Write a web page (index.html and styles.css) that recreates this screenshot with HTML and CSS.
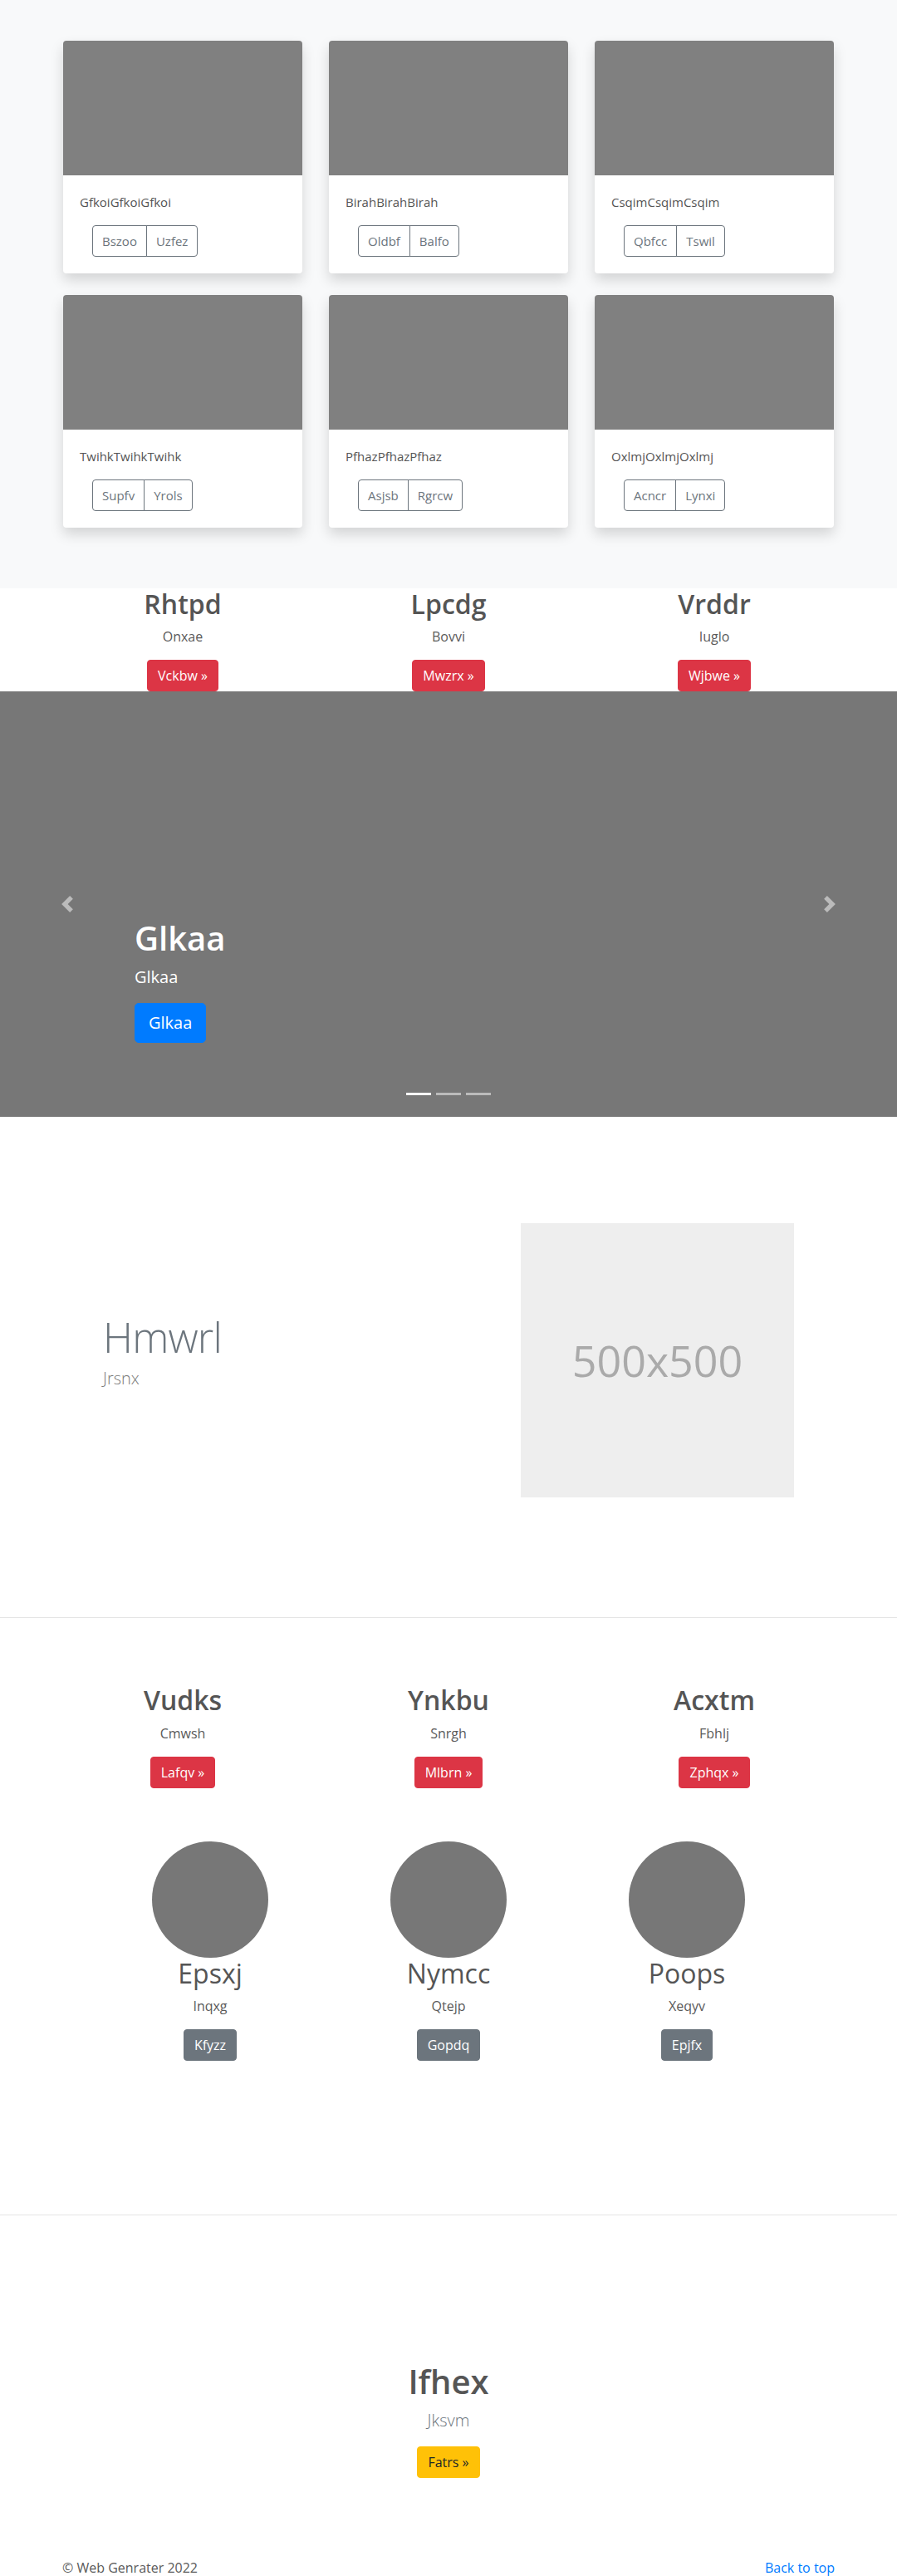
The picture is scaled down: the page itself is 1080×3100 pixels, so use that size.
FILE: index.html
```html
<!DOCTYPE html>
<html lang="en">
<head>
<meta charset="utf-8">
<title>Web Genrater</title>
<link rel="stylesheet" href="styles.css">
</head>
<body>
<section class="album">
  <div class="album-grid">
    <div class="card">
      <div class="card-img"></div>
      <div class="card-body">
        <p class="card-text">GfkoiGfkoiGfkoi</p>
        <div class="btn-group"><button class="btn btn-o">Bszoo</button><button class="btn btn-o">Uzfez</button></div>
      </div>
    </div>
    <div class="card">
      <div class="card-img"></div>
      <div class="card-body">
        <p class="card-text">BirahBirahBirah</p>
        <div class="btn-group"><button class="btn btn-o">Oldbf</button><button class="btn btn-o">Balfo</button></div>
      </div>
    </div>
    <div class="card">
      <div class="card-img"></div>
      <div class="card-body">
        <p class="card-text">CsqimCsqimCsqim</p>
        <div class="btn-group"><button class="btn btn-o">Qbfcc</button><button class="btn btn-o">Tswil</button></div>
      </div>
    </div>
    <div class="card">
      <div class="card-img"></div>
      <div class="card-body">
        <p class="card-text">TwihkTwihkTwihk</p>
        <div class="btn-group"><button class="btn btn-o">Supfv</button><button class="btn btn-o">Yrols</button></div>
      </div>
    </div>
    <div class="card">
      <div class="card-img"></div>
      <div class="card-body">
        <p class="card-text">PfhazPfhazPfhaz</p>
        <div class="btn-group"><button class="btn btn-o">Asjsb</button><button class="btn btn-o">Rgrcw</button></div>
      </div>
    </div>
    <div class="card">
      <div class="card-img"></div>
      <div class="card-body">
        <p class="card-text">OxlmjOxlmjOxlmj</p>
        <div class="btn-group"><button class="btn btn-o">Acncr</button><button class="btn btn-o">Lynxi</button></div>
      </div>
    </div>
  </div>
</section>

<section class="cols3">
  <div class="col">
    <h2 class="col-title">Rhtpd</h2>
    <p class="col-text">Onxae</p>
    <a class="btn btn-danger" href="#">Vckbw &raquo;</a>
  </div>
  <div class="col">
    <h2 class="col-title">Lpcdg</h2>
    <p class="col-text">Bovvi</p>
    <a class="btn btn-danger" href="#">Mwzrx &raquo;</a>
  </div>
  <div class="col">
    <h2 class="col-title">Vrddr</h2>
    <p class="col-text">Iuglo</p>
    <a class="btn btn-danger" href="#">Wjbwe &raquo;</a>
  </div>
</section>

<section class="carousel">
  <a class="car-ctrl car-prev" href="#" aria-label="Previous">
    <svg width="20" height="20" viewBox="0 0 8 8"><path d="M5.25 0l-4 4 4 4 1.5-1.5L4.25 4l2.5-2.5L5.25 0z" fill="#fff"/></svg>
  </a>
  <a class="car-ctrl car-next" href="#" aria-label="Next">
    <svg width="20" height="20" viewBox="0 0 8 8"><path d="M2.75 0l-1.5 1.5L3.75 4l-2.5 2.5L2.75 8l4-4-4-4z" fill="#fff"/></svg>
  </a>
  <div class="car-caption">
    <h1 class="car-title">Glkaa</h1>
    <p class="car-text">Glkaa</p>
    <a class="btn btn-primary btn-lg" href="#">Glkaa</a>
  </div>
  <ol class="car-ind">
    <li class="active"></li>
    <li></li>
    <li></li>
  </ol>
</section>

<section class="featurette">
  <div class="feat-text">
    <h2 class="feat-title">Hmwrl</h2>
    <p class="feat-lead">Jrsnx</p>
  </div>
  <div class="ph"><span>500x500</span></div>
</section>

<hr class="divider">

<section class="marketing">
  <div class="cols3 cols3-m">
    <div class="col">
      <h2 class="col-title">Vudks</h2>
      <p class="col-text">Cmwsh</p>
      <a class="btn btn-danger" href="#">Lafqv &raquo;</a>
    </div>
    <div class="col">
      <h2 class="col-title">Ynkbu</h2>
      <p class="col-text">Snrgh</p>
      <a class="btn btn-danger" href="#">Mlbrn &raquo;</a>
    </div>
    <div class="col">
      <h2 class="col-title">Acxtm</h2>
      <p class="col-text">Fbhlj</p>
      <a class="btn btn-danger" href="#">Zphqx &raquo;</a>
    </div>
  </div>
  <div class="circles">
    <div class="circ-col">
      <div class="circle"></div>
      <h2 class="circ-title">Epsxj</h2>
      <p class="col-text">Inqxg</p>
      <a class="btn btn-secondary" href="#">Kfyzz</a>
    </div>
    <div class="circ-col">
      <div class="circle"></div>
      <h2 class="circ-title">Nymcc</h2>
      <p class="col-text">Qtejp</p>
      <a class="btn btn-secondary" href="#">Gopdq</a>
    </div>
    <div class="circ-col">
      <div class="circle"></div>
      <h2 class="circ-title">Poops</h2>
      <p class="col-text">Xeqyv</p>
      <a class="btn btn-secondary" href="#">Epjfx</a>
    </div>
  </div>
</section>

<hr class="divider">

<section class="cta">
  <h1 class="cta-title">Ifhex</h1>
  <p class="cta-lead">Jksvm</p>
  <a class="btn btn-warning" href="#">Fatrs &raquo;</a>
</section>

<footer class="footer">
  <p>&copy; Web Genrater 2022</p>
  <a href="#" class="top-link">Back to top</a>
</footer>
</body>
</html>
```

FILE: styles.css
```css
* { box-sizing: border-box; }

body {
  margin: 0;
  font-family: "Open Sans", "Noto Sans", sans-serif;
  font-size: 16px;
  line-height: 1.5;
  color: #5a5a5a;
  background: #fff;
}

p, h1, h2 { margin: 0; }

.btn {
  display: inline-block;
  font-family: inherit;
  font-size: 16px;
  font-weight: 400;
  line-height: 24px;
  padding: 6px 12px;
  border: 1px solid transparent;
  border-radius: 4px;
  text-decoration: none;
  cursor: pointer;
  vertical-align: middle;
}

.btn-danger { background: #dc3545; border-color: #dc3545; color: #fff; }
.btn-secondary { background: #6c757d; border-color: #6c757d; color: #fff; }
.btn-warning { background: #ffc107; border-color: #ffc107; color: #212529; }
.btn-primary { background: #007bff; border-color: #007bff; color: #fff; }
.btn-lg { font-size: 20px; line-height: 30px; padding: 8px 16px; border-radius: 5px; }

/* Album */
.album {
  background: #f8f9fa;
  padding: 49px 0 73px;
}

.album-grid {
  display: grid;
  grid-template-columns: repeat(3, 288px);
  column-gap: 32px;
  row-gap: 26px;
  justify-content: center;
}

.card {
  background: #fff;
  border-radius: 4px;
  overflow: hidden;
  box-shadow: 0 8px 16px rgba(0, 0, 0, .15);
}

.card-img {
  height: 162px;
  background: #808080;
}

.card-body { padding: 20px; }

.card-text {
  margin-bottom: 16px;
  font-size: 15px;
  line-height: 24px;
  color: #555;
}

.btn-group {
  display: inline-flex;
  margin-left: 15px;
}

.btn-o {
  background: transparent;
  border-color: #6c757d;
  color: #6c757d;
  font-size: 15px;
  padding: 6px 11px;
}

.btn-group .btn-o:first-child { border-radius: 4px 0 0 4px; }
.btn-group .btn-o:last-child { border-radius: 0 4px 4px 0; margin-left: -1px; }

/* Three column text */
.cols3 {
  display: grid;
  grid-template-columns: repeat(3, 320px);
  justify-content: center;
  text-align: center;
}

.col-title {
  font-size: 32px;
  font-weight: 600;
  line-height: 1.2;
  margin-bottom: 8px;
  color: #555;
}

.col-text { margin-bottom: 16px; }

/* Carousel */
.carousel {
  position: relative;
  height: 512px;
  background: #777;
}

.car-ctrl {
  position: absolute;
  top: 0;
  bottom: 0;
  width: 15%;
  display: flex;
  align-items: center;
  justify-content: center;
  opacity: .5;
}

.car-prev { left: 0; }
.car-next { right: 0; }

.car-caption {
  position: absolute;
  left: 15%;
  right: 15%;
  top: 273px;
  color: #fff;
}

.car-title {
  font-size: 40px;
  font-weight: 600;
  line-height: 1.2;
  margin-bottom: 8px;
}

.car-text {
  font-size: 20px;
  line-height: 30px;
  margin-bottom: 16px;
}

.car-ind {
  position: absolute;
  left: 0;
  right: 0;
  bottom: 26px;
  margin: 0;
  padding: 0;
  list-style: none;
  display: flex;
  justify-content: center;
  gap: 6px;
}

.car-ind li {
  width: 30px;
  height: 3px;
  background: #fff;
  opacity: .5;
}

.car-ind li.active { opacity: 1; }

/* Featurette */
.featurette {
  display: flex;
  align-items: center;
  padding: 128px 0 144px 124px;
}

.feat-text { width: 503px; }

.feat-title {
  font-size: 50px;
  font-weight: 300;
  line-height: 1;
  letter-spacing: -0.8px;
  color: #6c757d;
  margin-bottom: 10px;
}

.feat-lead {
  font-size: 20px;
  font-weight: 300;
  line-height: 30px;
  color: #7a7a7a;
  margin-bottom: 16px;
}

.ph {
  width: 329px;
  height: 330px;
  background: #eee;
  color: #aaa;
  display: flex;
  align-items: center;
  justify-content: center;
  font-size: 52px;
  line-height: 1;
}

.divider {
  margin: 0;
  border: 0;
  border-top: 1px solid #e5e5e5;
}

/* Marketing */
.marketing { padding: 80px 0 185px; }

.cols3-m { margin-bottom: 64px; }

.circles {
  display: grid;
  grid-template-columns: repeat(3, 287px);
  justify-content: center;
  text-align: center;
}

.circ-col {
  display: flex;
  flex-direction: column;
  align-items: center;
}

.circle {
  width: 140px;
  height: 140px;
  border-radius: 50%;
  background: #777;
}

.circ-title {
  font-size: 32px;
  font-weight: 400;
  line-height: 1.2;
  margin-bottom: 8px;
  color: #555;
}

/* CTA */
.cta {
  padding-top: 176px;
  text-align: center;
}

.cta-title {
  font-size: 40px;
  font-weight: 600;
  line-height: 1.2;
  margin-bottom: 8px;
  color: #555;
}

.cta-lead {
  font-size: 20px;
  font-weight: 300;
  line-height: 30px;
  color: #6c757d;
  margin-bottom: 16px;
}

/* Footer */
.footer {
  width: 930px;
  margin: 0 auto;
  padding: 96px 0 32px;
  display: flex;
  justify-content: space-between;
}

.top-link {
  color: #007bff;
  text-decoration: none;
}
```
